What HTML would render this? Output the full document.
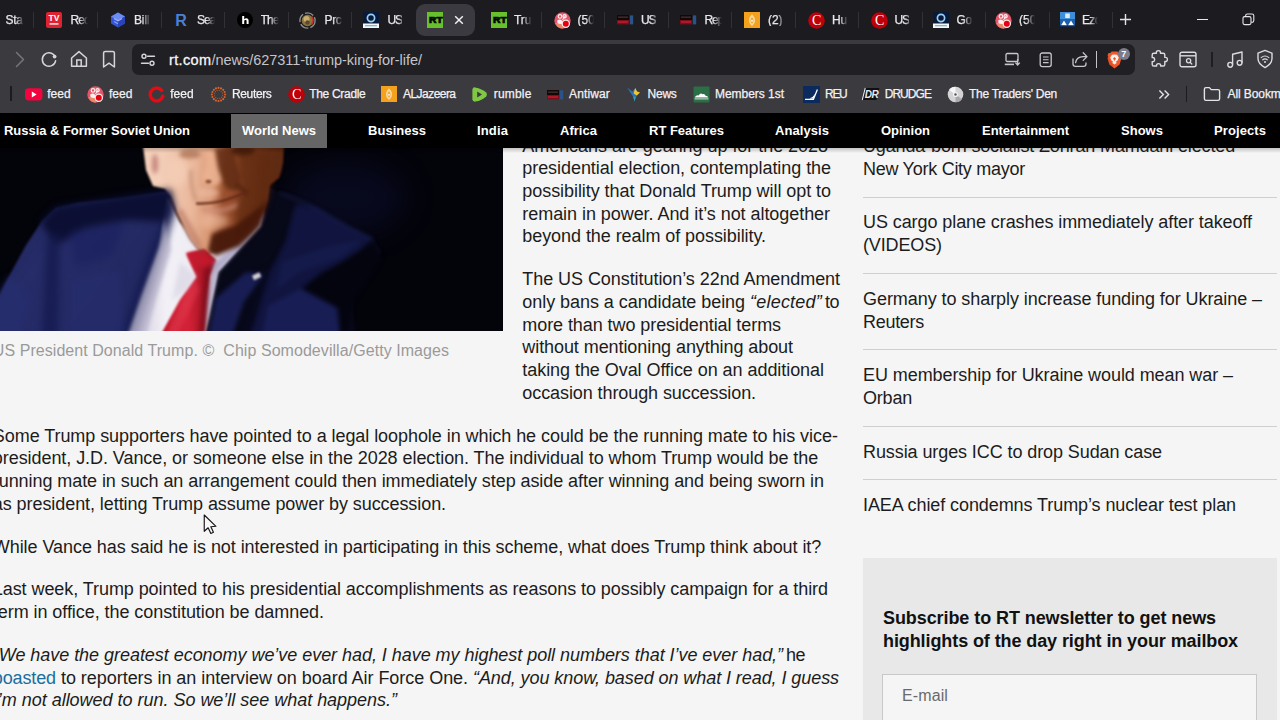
<!DOCTYPE html>
<html><head><meta charset="utf-8"><title>rt</title>
<style>
*{box-sizing:border-box}
html,body{margin:0;padding:0;width:1280px;height:720px;overflow:hidden;background:#f5f5f5;font-family:"Liberation Sans",sans-serif;}
.t{position:absolute;white-space:pre;font-family:"Liberation Sans",sans-serif;}
.a{position:absolute}
#tabs{left:0;top:0;width:1280px;height:40px;background:#1b1b20}
#tool{left:0;top:40px;width:1280px;height:73px;background:#3a3a3f}
#url{left:132px;top:44px;width:1003px;height:31px;border-radius:7px;background:#1f1f24}
#nav{left:0;top:113px;width:1280px;height:35px;background:#000}
#navsh{left:0;top:148px;width:1280px;height:5px;background:linear-gradient(#0003,#0000)}
#wn{left:231px;top:113.5px;width:96px;height:34.5px;background:#666}
.sep{position:absolute;left:863px;width:414px;height:1px;background:#cfcfcf}
.tsep{position:absolute;top:12px;width:1px;height:16px;background:#313137}
</style></head><body>

<div class="t" style="left:522.30px;top:136.76px;font-size:18px;line-height:18px;color:#1c1c1c;font-weight:normal;font-style:normal;letter-spacing:-0.040px;">Americans are gearing up for the 2028</div>
<div class="t" style="left:522.30px;top:159.01px;font-size:18px;line-height:18px;color:#1c1c1c;font-weight:normal;font-style:normal;letter-spacing:-0.063px;">presidential election, contemplating the</div>
<div class="t" style="left:522.30px;top:181.76px;font-size:18px;line-height:18px;color:#1c1c1c;font-weight:normal;font-style:normal;letter-spacing:-0.060px;">possibility that Donald Trump will opt to</div>
<div class="t" style="left:522.30px;top:204.51px;font-size:18px;line-height:18px;color:#1c1c1c;font-weight:normal;font-style:normal;letter-spacing:-0.054px;">remain in power. And it’s not altogether</div>
<div class="t" style="left:522.30px;top:227.26px;font-size:18px;line-height:18px;color:#1c1c1c;font-weight:normal;font-style:normal;letter-spacing:-0.066px;">beyond the realm of possibility.</div>
<div class="t" style="left:522.30px;top:270.01px;font-size:18px;line-height:18px;color:#1c1c1c;font-weight:normal;font-style:normal;letter-spacing:-0.060px;">The US Constitution’s 22nd Amendment</div>
<div class="t" style="left:522.30px;top:315.51px;font-size:18px;line-height:18px;color:#1c1c1c;font-weight:normal;font-style:normal;letter-spacing:-0.076px;">more than two presidential terms</div>
<div class="t" style="left:522.30px;top:338.26px;font-size:18px;line-height:18px;color:#1c1c1c;font-weight:normal;font-style:normal;letter-spacing:-0.076px;">without mentioning anything about</div>
<div class="t" style="left:522.30px;top:361.01px;font-size:18px;line-height:18px;color:#1c1c1c;font-weight:normal;font-style:normal;letter-spacing:-0.056px;">taking the Oval Office on an additional</div>
<div class="t" style="left:522.30px;top:383.76px;font-size:18px;line-height:18px;color:#1c1c1c;font-weight:normal;font-style:normal;letter-spacing:-0.087px;">occasion through succession.</div>
<div class="t" style="left:522.30px;top:292.76px;font-size:18px;line-height:18px;color:#1c1c1c;font-weight:normal;font-style:normal;letter-spacing:-0.053px;">only bans a candidate being </div>
<div class="t" style="left:750.00px;top:292.76px;font-size:18px;line-height:18px;color:#1c1c1c;font-weight:normal;font-style:italic;letter-spacing:0.219px;">“elected”</div>
<div class="t" style="left:825.00px;top:292.76px;font-size:18px;line-height:18px;color:#1c1c1c;font-weight:normal;font-style:normal;letter-spacing:-0.508px;">to</div>
<div class="t" style="left:-7.20px;top:426.51px;font-size:18px;line-height:18px;color:#1c1c1c;font-weight:normal;font-style:normal;letter-spacing:-0.062px;">Some Trump supporters have pointed to a legal loophole in which he could be the running mate to his vice-</div>
<div class="t" style="left:-7.20px;top:449.26px;font-size:18px;line-height:18px;color:#1c1c1c;font-weight:normal;font-style:normal;letter-spacing:-0.063px;">president, J.D. Vance, or someone else in the 2028 election. The individual to whom Trump would be the</div>
<div class="t" style="left:-7.20px;top:472.01px;font-size:18px;line-height:18px;color:#1c1c1c;font-weight:normal;font-style:normal;letter-spacing:-0.072px;">running mate in such an arrangement could then immediately step aside after winning and being sworn in</div>
<div class="t" style="left:-7.20px;top:494.76px;font-size:18px;line-height:18px;color:#1c1c1c;font-weight:normal;font-style:normal;letter-spacing:-0.073px;">as president, letting Trump assume power by succession.</div>
<div class="t" style="left:-7.20px;top:537.51px;font-size:18px;line-height:18px;color:#1c1c1c;font-weight:normal;font-style:normal;letter-spacing:-0.063px;">While Vance has said he is not interested in participating in this scheme, what does Trump think about it?</div>
<div class="t" style="left:-7.20px;top:580.26px;font-size:18px;line-height:18px;color:#1c1c1c;font-weight:normal;font-style:normal;letter-spacing:-0.070px;">Last week, Trump pointed to his presidential accomplishments as reasons to possibly campaign for a third</div>
<div class="t" style="left:-7.20px;top:603.01px;font-size:18px;line-height:18px;color:#1c1c1c;font-weight:normal;font-style:normal;letter-spacing:-0.062px;">term in office, the constitution be damned.</div>
<div class="t" style="left:-7.20px;top:645.76px;font-size:18px;line-height:18px;color:#1c1c1c;font-weight:normal;font-style:italic;letter-spacing:-0.040px;">“We have the greatest economy we’ve ever had, I have my highest poll numbers that I’ve ever had,”</div>
<div class="t" style="left:786.00px;top:645.76px;font-size:18px;line-height:18px;color:#1c1c1c;font-weight:normal;font-style:normal;letter-spacing:-0.516px;">he</div>
<div class="t" style="left:-7.20px;top:668.51px;font-size:18px;line-height:18px;color:#1a6e9e;font-weight:normal;font-style:normal;letter-spacing:-0.123px;">boasted</div>
<div class="t" style="left:56.00px;top:668.51px;font-size:18px;line-height:18px;color:#1c1c1c;font-weight:normal;font-style:normal;letter-spacing:-0.041px;"> to reporters in an interview on board Air Force One. </div>
<div class="t" style="left:473.00px;top:668.51px;font-size:18px;line-height:18px;color:#1c1c1c;font-weight:normal;font-style:italic;letter-spacing:-0.072px;">“And, you know, based on what I read, I guess</div>
<div class="t" style="left:-7.20px;top:691.26px;font-size:18px;line-height:18px;color:#1c1c1c;font-weight:normal;font-style:italic;letter-spacing:-0.020px;">I’m not allowed to run. So we’ll see what happens.”</div>
<div class="t" style="left:-7.20px;top:343.46px;font-size:16px;line-height:16px;color:#9a9a9a;font-weight:normal;font-style:normal;letter-spacing:0.056px;">US President Donald Trump. ©  Chip Somodevilla/Getty Images</div>
<div class="t" style="left:863.00px;top:136.76px;font-size:18px;line-height:18px;color:#1c1c1c;font-weight:normal;font-style:normal;letter-spacing:-0.141px;">Uganda-born socialist Zohran Mamdani elected</div>
<div class="t" style="left:863.00px;top:159.76px;font-size:18px;line-height:18px;color:#1c1c1c;font-weight:normal;font-style:normal;letter-spacing:-0.266px;">New York City mayor</div>
<div class="t" style="left:863.00px;top:213.26px;font-size:18px;line-height:18px;color:#1c1c1c;font-weight:normal;font-style:normal;letter-spacing:-0.081px;">US cargo plane crashes immediately after takeoff</div>
<div class="t" style="left:863.00px;top:236.26px;font-size:18px;line-height:18px;color:#1c1c1c;font-weight:normal;font-style:normal;letter-spacing:-0.127px;">(VIDEOS)</div>
<div class="t" style="left:863.00px;top:289.76px;font-size:18px;line-height:18px;color:#1c1c1c;font-weight:normal;font-style:normal;letter-spacing:-0.065px;">Germany to sharply increase funding for Ukraine –</div>
<div class="t" style="left:863.00px;top:312.76px;font-size:18px;line-height:18px;color:#1c1c1c;font-weight:normal;font-style:normal;letter-spacing:-0.290px;">Reuters</div>
<div class="t" style="left:863.00px;top:366.26px;font-size:18px;line-height:18px;color:#1c1c1c;font-weight:normal;font-style:normal;letter-spacing:-0.075px;">EU membership for Ukraine would mean war –</div>
<div class="t" style="left:863.00px;top:389.26px;font-size:18px;line-height:18px;color:#1c1c1c;font-weight:normal;font-style:normal;letter-spacing:-0.206px;">Orban</div>
<div class="t" style="left:863.00px;top:442.76px;font-size:18px;line-height:18px;color:#1c1c1c;font-weight:normal;font-style:normal;letter-spacing:-0.091px;">Russia urges ICC to drop Sudan case</div>
<div class="t" style="left:863.00px;top:496.26px;font-size:18px;line-height:18px;color:#1c1c1c;font-weight:normal;font-style:normal;letter-spacing:-0.086px;">IAEA chief condemns Trump’s nuclear test plan</div>
<div class="sep" style="top:196.5px"></div>
<div class="sep" style="top:272.5px"></div>
<div class="sep" style="top:349.0px"></div>
<div class="sep" style="top:425.5px"></div>
<div class="sep" style="top:479.0px"></div>
<div class="a" style="left:863px;top:558px;width:414px;height:170px;background:#e8e8e8"></div>
<div class="t" style="left:883.00px;top:608.76px;font-size:18px;line-height:18px;color:#111;font-weight:bold;font-style:normal;letter-spacing:-0.081px;">Subscribe to RT newsletter to get news</div>
<div class="t" style="left:883.00px;top:631.76px;font-size:18px;line-height:18px;color:#111;font-weight:bold;font-style:normal;letter-spacing:-0.093px;">highlights of the day right in your mailbox</div>
<div class="a" style="left:882px;top:673.5px;width:375px;height:60px;background:#f5f5f5;border:1px solid #c8c8c8"></div>
<div class="t" style="left:902.00px;top:687.96px;font-size:16px;line-height:16px;color:#6a6a6a;font-weight:normal;font-style:normal;letter-spacing:0.109px;">E-mail</div>
<div class="a" id="photo" style="left:-4px;top:148px;width:506.5px;height:183px;background:#05050a;overflow:hidden"><svg style="position:absolute;left:4px;top:0" width="502.5" height="183" viewBox="0 148 502.5 183">
<defs>
<filter color-interpolation-filters="sRGB" id="b1" x="-5%" y="-5%" width="110%" height="110%"><feGaussianBlur stdDeviation="0.8"/></filter>
<filter color-interpolation-filters="sRGB" id="b15" x="-20%" y="-20%" width="140%" height="140%"><feGaussianBlur stdDeviation="1.4"/></filter>
<filter color-interpolation-filters="sRGB" id="b2" x="-20%" y="-20%" width="140%" height="140%"><feGaussianBlur stdDeviation="2.2"/></filter>
<filter color-interpolation-filters="sRGB" id="b3" x="-20%" y="-20%" width="140%" height="140%"><feGaussianBlur stdDeviation="3.5"/></filter>
<filter color-interpolation-filters="sRGB" id="b6" x="-50%" y="-50%" width="200%" height="200%"><feGaussianBlur stdDeviation="14"/></filter>
<linearGradient id="skin" gradientUnits="userSpaceOnUse" x1="158" y1="178" x2="276" y2="186">
<stop offset="0" stop-color="#f4d0ba"/><stop offset=".30" stop-color="#ebb89c"/><stop offset=".46" stop-color="#d89672"/><stop offset=".56" stop-color="#9c5230"/><stop offset=".8" stop-color="#823e20"/><stop offset="1" stop-color="#602a12"/></linearGradient>
<linearGradient id="suitL" gradientUnits="userSpaceOnUse" x1="0" y1="210" x2="165" y2="330">
<stop offset="0" stop-color="#1e2357"/><stop offset=".3" stop-color="#262c68"/><stop offset="1" stop-color="#21275e"/></linearGradient>
<linearGradient id="shirt" gradientUnits="userSpaceOnUse" x1="135" y1="260" x2="262" y2="260">
<stop offset="0" stop-color="#d4d0e0"/><stop offset=".25" stop-color="#f3f1f7"/><stop offset=".6" stop-color="#ece9f2"/><stop offset="1" stop-color="#c2bcd6"/></linearGradient>
<linearGradient id="tie" gradientUnits="userSpaceOnUse" x1="165" y1="300" x2="210" y2="300">
<stop offset="0" stop-color="#bf172a"/><stop offset=".5" stop-color="#d52238"/><stop offset="1" stop-color="#98101f"/></linearGradient>
</defs>
<rect x="0" y="148" width="503" height="183" fill="#03030a"/>
<ellipse cx="345" cy="198" rx="60" ry="36" fill="#0c0e2e" opacity=".55" filter="url(#b6)"/>
<g filter="url(#b1)">
<!-- right suit base (dark) -->
<path d="M268,188 L303,198 L340,221 L374,239 L382,252 L360,275 L352,300 L356,336 L200,336 L212,276 L254,226 Z" fill="#070818"/>
<!-- left suit -->
<path d="M-6,305 L8,278 L26,245 L42,221 L56,208 L78,203 L122,198 L170,191 L175,205 L166,245 L150,292 L134,336 L-6,336 Z" fill="url(#suitL)"/>
<!-- shirt -->
<path d="M167,197 L180,222 L203,252 L225,248 L264,209 L260,226 L218,272 L205,336 L128,336 L141,298 L159,248 Z" fill="url(#shirt)"/>
<!-- neck / face -->
<path d="M143,146 L284,146 L283,162 L279,178 L270,185 L268,200 L262,215 L251,232 L236,244 L219,251 L209,254 L203,252 L197,247 L190,238 L183,225 L176,211 L171,197 L165,189 L153,186 L146,170 Z" fill="url(#skin)"/>
<!-- tie -->
<path d="M186,253 L204,249 L216,260 L210,276 L204,336 L160,336 L180,300 L196,277 Z" fill="url(#tie)"/>
</g>
<!-- right suit lit regions -->
<g filter="url(#b2)">
<path d="M296,204 L318,208 L340,222 L372,239 L352,258 L322,272 L302,288 L338,308 L340,336 L250,336 L258,310 L270,272 L286,240 L292,215 Z" fill="#10143e"/>
<path d="M262,336 L268,306 L300,289 L336,308 L340,336 Z" fill="#181e54"/>
<path d="M282,262 L330,246 L362,240 L340,258 L300,272 L276,290 Z" fill="#141a4a"/>
<path d="M208,336 L216,298 L246,272 L264,274 L244,302 L232,336 Z" fill="#181e54"/>
<path d="M268,268 L244,336" stroke="#070920" stroke-width="4.5" fill="none"/>
<path d="M322,274 L372,243 L382,258 L354,300 L347,336 L341,336 L339,308 L303,289 Z" fill="#04040f" opacity=".97"/>
<path d="M280,193 L310,205 L350,228 L373,239" stroke="#242b68" stroke-width="1.8" fill="none" opacity=".7"/>
</g>
<!-- left suit shading -->
<g filter="url(#b3)">
<path d="M40,222 L56,206 L122,196 L171,189 L175,206 L168,222 L126,220 L84,228 L56,246 Z" fill="#0b0e30" opacity=".95"/>
<path d="M46,240 L60,232 L58,336 L42,336 Z" fill="#141a4e" opacity=".75"/>
<path d="M172,198 L176,210 L152,290 L137,336 L120,336 L150,250 Z" fill="#141a50" opacity=".8"/>
<path d="M70,232 L124,222 L112,256 L75,266 Z" fill="#1a2160" opacity=".65"/>
<path d="M-6,300 L10,275 L30,300 L20,336 L-6,336 Z" fill="#272e72" opacity=".6"/>
<path d="M70,280 L120,270 L125,336 L70,336 Z" fill="#272e70" opacity=".45"/>
</g>
<!-- shirt shading / tie shading -->
<g filter="url(#b2)">
<path d="M141,298 L159,248 L166,225 L171,250 L158,292 L146,336 L128,336 Z" fill="#b7b2ca" opacity=".75"/>
<path d="M218,272 L260,226 L264,211 L232,250 L214,262 L208,300 L205,336 L212,300 Z" fill="#a49ec0" opacity=".8"/>
<path d="M180,262 L196,276 L186,290 L172,300 Z" fill="#dcd8e6" opacity=".8"/>
<path d="M206,262 L215,259 L210,276 L206,330 L199,336 L203,290 Z" fill="#7a0c1a" opacity=".75"/>
<path d="M187,254 L204,250 L215,260 L208,268 L194,265 Z" fill="#c41a2e" opacity=".9"/><path d="M182,300 L196,280 L199,290 L178,334 L166,334 Z" fill="#e23a4e" opacity=".55"/>
</g>
<!-- face features -->
<g filter="url(#b3)">
<path d="M236,149 L272,149 L271,185 L268,200 L262,215 L250,232 L240,240 L235,215 L241,190 Z" fill="#55240c" opacity=".6"/>
<ellipse cx="178" cy="172" rx="10" ry="14" fill="#f6d2bc" opacity=".6"/>
<ellipse cx="214" cy="221" rx="14" ry="8" fill="#eebc9e" opacity=".65"/>
</g>
<g filter="url(#b2)">
<path d="M208,251 L212,234 L236,225 L262,205 L268,198 L260,226 L240,246 L216,256 Z" fill="#46180a" opacity=".94"/>
<path d="M215,149 L233,149 L241,178 L238,191 L227,189 L222,180 L218,168 Z" fill="#5e2a12" opacity=".82"/>
<path d="M205,150 L214,150 L218,168 L222,180 L216,186 L206,184 L202,178 L206,165 Z" fill="#ecb493" opacity=".85"/>
<ellipse cx="190" cy="154" rx="11" ry="4.5" fill="#b0785a" opacity=".85"/>
<ellipse cx="243" cy="151" rx="12" ry="4.5" fill="#421a08" opacity=".85"/>
<ellipse cx="208" cy="193" rx="11" ry="5" fill="#ecbca4" opacity=".6"/>
<ellipse cx="155" cy="164" rx="3.2" ry="10" fill="#c27c76" opacity=".85"/>
<ellipse cx="277" cy="164" rx="4" ry="12" fill="#5e2c14" opacity=".85"/>
<path d="M176,212 L183,226 L190,239 L197,248 L204,253 L200,240 L190,222 L182,208 Z" fill="#b4705a" opacity=".55"/>
<path d="M191,170 Q190,186 196,201" stroke="#bf8a6e" stroke-width="3" fill="none" opacity=".8"/>
<path d="M237,184 Q243,190 247,194" stroke="#3e1808" stroke-width="3" fill="none" opacity=".8"/>
<path d="M200,206 Q220,212 238,202 L236,208 Q218,216 202,211 Z" fill="#cf8f7c" opacity=".7"/>
</g>
<g filter="url(#b1)">
<ellipse cx="208.5" cy="181.5" rx="3" ry="1.8" fill="#6a3018" opacity=".8"/>
<path d="M196,203.5 Q214,204 227,199.5 T247,192" stroke="#64281a" stroke-width="2.2" fill="none"/>
<path d="M171,198 L176,212 L183,226 L190,239 L197,248 L203,253" stroke="#6a3a26" stroke-width="1.2" fill="none" opacity=".7"/>
<rect x="252.5" y="274" width="8" height="5" fill="#d8d0d0" transform="rotate(-25 256 276)"/>
</g>
</svg>
</div>
<div class="a" id="nav"></div><div class="a" id="navsh"></div><div class="a" id="wn"></div>
<div class="t" style="left:4.00px;top:124.00px;font-size:13px;line-height:13px;color:#fff;font-weight:bold;font-style:normal;letter-spacing:-0.039px;">Russia &amp; Former Soviet Union</div>
<div class="t" style="left:242.00px;top:124.00px;font-size:13px;line-height:13px;color:#fff;font-weight:bold;font-style:normal;letter-spacing:-0.017px;">World News</div>
<div class="t" style="left:368.00px;top:124.00px;font-size:13px;line-height:13px;color:#fff;font-weight:bold;font-style:normal;letter-spacing:0.023px;">Business</div>
<div class="t" style="left:477.00px;top:124.00px;font-size:13px;line-height:13px;color:#fff;font-weight:bold;font-style:normal;letter-spacing:0.131px;">India</div>
<div class="t" style="left:560.00px;top:124.00px;font-size:13px;line-height:13px;color:#fff;font-weight:bold;font-style:normal;letter-spacing:0.023px;">Africa</div>
<div class="t" style="left:649.00px;top:124.00px;font-size:13px;line-height:13px;color:#fff;font-weight:bold;font-style:normal;letter-spacing:-0.013px;">RT Features</div>
<div class="t" style="left:775.00px;top:124.00px;font-size:13px;line-height:13px;color:#fff;font-weight:bold;font-style:normal;letter-spacing:0.064px;">Analysis</div>
<div class="t" style="left:881.00px;top:124.00px;font-size:13px;line-height:13px;color:#fff;font-weight:bold;font-style:normal;letter-spacing:-0.016px;">Opinion</div>
<div class="t" style="left:982.00px;top:124.00px;font-size:13px;line-height:13px;color:#fff;font-weight:bold;font-style:normal;letter-spacing:-0.031px;">Entertainment</div>
<div class="t" style="left:1121.00px;top:124.00px;font-size:13px;line-height:13px;color:#fff;font-weight:bold;font-style:normal;letter-spacing:0.019px;">Shows</div>
<div class="t" style="left:1214.00px;top:124.00px;font-size:13px;line-height:13px;color:#fff;font-weight:bold;font-style:normal;letter-spacing:0.086px;">Projects</div>
<div class="a" id="tabs"></div><div class="a" id="tool"></div><div class="a" id="url"></div>
<div class="tsep" style="left:33px"></div>
<div class="tsep" style="left:97px"></div>
<div class="tsep" style="left:160.5px"></div>
<div class="tsep" style="left:224px"></div>
<div class="tsep" style="left:287.5px"></div>
<div class="tsep" style="left:351px"></div>
<div class="tsep" style="left:540.5px"></div>
<div class="tsep" style="left:604px"></div>
<div class="tsep" style="left:667.5px"></div>
<div class="tsep" style="left:731px"></div>
<div class="tsep" style="left:794.5px"></div>
<div class="tsep" style="left:858px"></div>
<div class="tsep" style="left:921.5px"></div>
<div class="tsep" style="left:985px"></div>
<div class="tsep" style="left:1048.5px"></div>
<div class="tsep" style="left:1112px"></div>
<div class="a" style="left:415.5px;top:4px;width:59.5px;height:32px;border-radius:9px;background:#3a3a40"></div>
<svg class="a" style="left:46px;top:12px" width="16" height="16" viewBox="0 0 16 16"><rect x="0" y="0" width="16" height="16" rx="2" fill="#df2230"/><text x="8" y="9.3" font-family="Liberation Sans" font-weight="bold" font-size="8.5" fill="#fff" text-anchor="middle">TV</text><rect x="3.5" y="11" width="9" height="1.8" fill="#f6c6ca"/></svg>
<svg class="a" style="left:110px;top:12px" width="16" height="16" viewBox="0 0 16 16"><path d="M8 0.5 L15 4.5 L15 11.5 L8 15.5 L1 11.5 L1 4.5Z" fill="#3555d6"/><path d="M8 0.5 L15 4.5 L8 8.5 L1 4.5Z" fill="#6d8cf2"/><path d="M8 8.5 L15 4.5 L15 11.5 L8 15.5Z" fill="#2a44b8"/><path d="M4 6.5 L8 8.8 L12 6.5" stroke="#9fb4ff" stroke-width="1.2" fill="none"/><path d="M4 9.5 L8 11.8" stroke="#8aa2f8" stroke-width="1.2" fill="none"/></svg>
<svg class="a" style="left:173px;top:11px" width="16" height="18" viewBox="0 0 16 18"><text x="8" y="14.6" font-family="Liberation Sans" font-weight="bold" font-size="16" fill="#4a80d8" text-anchor="middle">R</text></svg>
<svg class="a" style="left:237px;top:12px" width="16" height="16" viewBox="0 0 16 16"><circle cx="8" cy="8" r="8" fill="#000"/><path d="M5.2 4 h2 v3.2 c.6-.7 1.3-1 2.2-1 1.5 0 2.2.9 2.2 2.4 V12 h-2 V9 c0-.7-.3-1.1-1-1.1 -.8 0-1.4.5-1.4 1.4 V12 h-2z" fill="#fff"/></svg>
<svg class="a" style="left:299px;top:12px" width="17" height="17" viewBox="0 0 17 17"><circle cx="8.5" cy="8.5" r="7.6" fill="none" stroke="#8e8c8a" stroke-width="1.4" stroke-dasharray="9 2"/><circle cx="8.5" cy="8.5" r="5.8" fill="#8c7440"/><circle cx="7.5" cy="7" r="3" fill="#c8b070"/><path d="M12.5 4.5 A6 6 0 0 1 12.5 12.5" stroke="#c8302a" stroke-width="1.6" fill="none"/><circle cx="8.5" cy="10.5" r="2.2" fill="#5a4a2a"/></svg>
<svg class="a" style="left:363px;top:12px" width="16" height="16" viewBox="0 0 16 16"><rect width="16" height="16" fill="#071a3c"/><circle cx="8" cy="6" r="3.6" fill="none" stroke="#9ad0f0" stroke-width="1.7"/><rect x="0" y="11.5" width="16" height="4.5" fill="#f4f6f8"/><rect x="2" y="13" width="12" height="1.3" fill="#7ab8d8"/></svg>
<svg class="a" style="left:427px;top:12px" width="16" height="16" viewBox="0 0 16 16"><rect width="16" height="16" fill="#67c02c"/><text x="2" y="10.95" font-family="Liberation Sans" font-weight="bold" font-size="8.4" fill="#030a00" textLength="13.8" lengthAdjust="spacingAndGlyphs" stroke="#030a00" stroke-width=".7">RT</text></svg>
<svg class="a" style="left:491px;top:12px" width="16" height="16" viewBox="0 0 16 16"><rect width="16" height="16" fill="#67c02c"/><text x="2" y="10.95" font-family="Liberation Sans" font-weight="bold" font-size="8.4" fill="#030a00" textLength="13.8" lengthAdjust="spacingAndGlyphs" stroke="#030a00" stroke-width=".7">RT</text></svg>
<svg class="a" style="left:554px;top:12px" width="17" height="17" viewBox="0 0 17 17"><circle cx="8.5" cy="8.5" r="8.2" fill="#e4576a"/><path d="M1.5 11 A8 8 0 0 0 9 16.6 L10 11 Z" fill="#e88a6a"/><path d="M3.2 8.6 q2.6 -2.2 5.2 .3 q1.2 1.6 -.6 3 q-2.8 .6 -4.4 -1.2z" fill="#fbeeee"/><circle cx="6" cy="4.4" r="1.8" fill="none" stroke="#fbeeee" stroke-width="1.2"/><circle cx="10.6" cy="4.2" r="1.6" fill="none" stroke="#fbeeee" stroke-width="1.2"/><path d="M8.5 8 L11.5 3.5" stroke="#fbeeee" stroke-width="1.1"/><circle cx="11.8" cy="11.8" r="4.2" fill="#fbeeee"/><circle cx="11.8" cy="11.8" r="3" fill="#e60012"/></svg>
<svg class="a" style="left:617px;top:15px" width="17" height="10" viewBox="0 0 17 10"><rect x="0" y="0" width="12" height="5" fill="#120808"/><rect x="1" y="1.4" width="10" height="1.6" fill="#3a2a2a"/><rect x="0" y="5" width="12" height="4.4" fill="#7a0e1a"/><rect x="1" y="6" width="10" height="2" fill="#b01828"/><rect x="12.8" y="0.4" width="3.4" height="9" fill="#2a5488"/></svg>
<svg class="a" style="left:680px;top:15px" width="17" height="10" viewBox="0 0 17 10"><rect x="0" y="0" width="12" height="5" fill="#120808"/><rect x="1" y="1.4" width="10" height="1.6" fill="#3a2a2a"/><rect x="0" y="5" width="12" height="4.4" fill="#7a0e1a"/><rect x="1" y="6" width="10" height="2" fill="#b01828"/><rect x="12.8" y="0.4" width="3.4" height="9" fill="#2a5488"/></svg>
<svg class="a" style="left:744px;top:12px" width="16" height="16" viewBox="0 0 16 16"><rect width="16" height="16" fill="#f4a11d"/><path d="M8 2.2 C9.6 4.4 11.4 6 11 9 C10.8 11 9.6 12.4 8 14 C6.4 12.4 5.2 11 5 9 C4.6 6 6.4 4.4 8 2.2Z" fill="#fbd9a0"/><path d="M8 5 C8.8 6.4 9.6 7.4 9.4 9 C9.2 10.2 8.6 11 8 11.8 C7.4 11 6.8 10.2 6.6 9 C6.4 7.4 7.2 6.4 8 5Z" fill="#f4a11d"/><circle cx="8" cy="8.8" r="1" fill="#fff3dc"/></svg>
<svg class="a" style="left:808px;top:11.5px" width="17" height="17" viewBox="0 0 17 17"><circle cx="8.5" cy="8.5" r="8.3" fill="#c00008"/><text x="8.6" y="13.4" font-family="Liberation Serif" font-size="14" fill="#fff" text-anchor="middle">C</text></svg>
<svg class="a" style="left:870.5px;top:11.5px" width="17" height="17" viewBox="0 0 17 17"><circle cx="8.5" cy="8.5" r="8.3" fill="#c00008"/><text x="8.6" y="13.4" font-family="Liberation Serif" font-size="14" fill="#fff" text-anchor="middle">C</text></svg>
<svg class="a" style="left:932.5px;top:12px" width="16" height="16" viewBox="0 0 16 16"><rect width="16" height="16" fill="#071a3c"/><circle cx="8" cy="6" r="3.6" fill="none" stroke="#9ad0f0" stroke-width="1.7"/><rect x="0" y="11.5" width="16" height="4.5" fill="#f4f6f8"/><rect x="2" y="13" width="12" height="1.3" fill="#7ab8d8"/></svg>
<svg class="a" style="left:995px;top:12px" width="17" height="17" viewBox="0 0 17 17"><circle cx="8.5" cy="8.5" r="8.2" fill="#e4576a"/><path d="M1.5 11 A8 8 0 0 0 9 16.6 L10 11 Z" fill="#e88a6a"/><path d="M3.2 8.6 q2.6 -2.2 5.2 .3 q1.2 1.6 -.6 3 q-2.8 .6 -4.4 -1.2z" fill="#fbeeee"/><circle cx="6" cy="4.4" r="1.8" fill="none" stroke="#fbeeee" stroke-width="1.2"/><circle cx="10.6" cy="4.2" r="1.6" fill="none" stroke="#fbeeee" stroke-width="1.2"/><path d="M8.5 8 L11.5 3.5" stroke="#fbeeee" stroke-width="1.1"/><circle cx="11.8" cy="11.8" r="4.2" fill="#fbeeee"/><circle cx="11.8" cy="11.8" r="3" fill="#e60012"/></svg>
<svg class="a" style="left:1060px;top:12px" width="15" height="15" viewBox="0 0 15 15"><rect width="15" height="15" rx="1" fill="#1e5fae"/><rect x="0" y="0" width="15" height="7" fill="#3f8fd8"/><rect x="5.2" y="1.5" width="4.6" height="4.6" fill="#d9ecfb"/><path d="M1 13.5 L4 8.5 L7 13.5Z M8 13.5 L11 8.5 L14 13.5Z" fill="#fff"/><rect x="0" y="13.4" width="15" height="1.6" fill="#0c2a54"/></svg>
<div class="t" style="left:5.50px;top:13.84px;font-size:12px;line-height:12px;color:#e8e8ec;font-weight:normal;font-style:normal;letter-spacing:-0.339px;-webkit-mask-image:linear-gradient(90deg,#000 10px,transparent 18px);mask-image:linear-gradient(90deg,#000 10px,transparent 18px);-webkit-text-stroke:.25px #e8e8ec;">Sta</div>
<div class="t" style="left:70.50px;top:13.84px;font-size:12px;line-height:12px;color:#e8e8ec;font-weight:normal;font-style:normal;letter-spacing:-0.948px;-webkit-mask-image:linear-gradient(90deg,#000 8px,transparent 17px);mask-image:linear-gradient(90deg,#000 8px,transparent 17px);-webkit-text-stroke:.25px #e8e8ec;">Rec</div>
<div class="t" style="left:134.00px;top:13.84px;font-size:12px;line-height:12px;color:#e8e8ec;font-weight:normal;font-style:normal;letter-spacing:-0.129px;-webkit-mask-image:linear-gradient(90deg,#000 8px,transparent 17px);mask-image:linear-gradient(90deg,#000 8px,transparent 17px);-webkit-text-stroke:.25px #e8e8ec;">Bill</div>
<div class="t" style="left:197.00px;top:13.84px;font-size:12px;line-height:12px;color:#e8e8ec;font-weight:normal;font-style:normal;letter-spacing:-1.120px;-webkit-mask-image:linear-gradient(90deg,#000 9px,transparent 18px);mask-image:linear-gradient(90deg,#000 9px,transparent 18px);-webkit-text-stroke:.25px #e8e8ec;">Sea</div>
<div class="t" style="left:260.50px;top:13.84px;font-size:12px;line-height:12px;color:#e8e8ec;font-weight:normal;font-style:normal;letter-spacing:-0.729px;-webkit-mask-image:linear-gradient(90deg,#000 9px,transparent 18px);mask-image:linear-gradient(90deg,#000 9px,transparent 18px);-webkit-text-stroke:.25px #e8e8ec;">The</div>
<div class="t" style="left:324.50px;top:13.84px;font-size:12px;line-height:12px;color:#e8e8ec;font-weight:normal;font-style:normal;letter-spacing:-0.333px;-webkit-mask-image:linear-gradient(90deg,#000 8px,transparent 18px);mask-image:linear-gradient(90deg,#000 8px,transparent 18px);-webkit-text-stroke:.25px #e8e8ec;">Prc</div>
<div class="t" style="left:387.50px;top:13.84px;font-size:12px;line-height:12px;color:#e8e8ec;font-weight:normal;font-style:normal;letter-spacing:-1.086px;-webkit-mask-image:linear-gradient(90deg,#000 10px,transparent 18px);mask-image:linear-gradient(90deg,#000 10px,transparent 18px);-webkit-text-stroke:.25px #e8e8ec;">US</div>
<div class="t" style="left:514.00px;top:13.84px;font-size:12px;line-height:12px;color:#e8e8ec;font-weight:normal;font-style:normal;letter-spacing:-0.021px;-webkit-mask-image:linear-gradient(90deg,#000 8px,transparent 18px);mask-image:linear-gradient(90deg,#000 8px,transparent 18px);-webkit-text-stroke:.25px #e8e8ec;">Tru</div>
<div class="t" style="left:577.50px;top:13.84px;font-size:12px;line-height:12px;color:#e8e8ec;font-weight:normal;font-style:normal;letter-spacing:0.052px;-webkit-mask-image:linear-gradient(90deg,#000 8px,transparent 16px);mask-image:linear-gradient(90deg,#000 8px,transparent 16px);-webkit-text-stroke:.25px #e8e8ec;">(50</div>
<div class="t" style="left:641.00px;top:13.84px;font-size:12px;line-height:12px;color:#e8e8ec;font-weight:normal;font-style:normal;letter-spacing:-1.086px;-webkit-mask-image:linear-gradient(90deg,#000 10px,transparent 19px);mask-image:linear-gradient(90deg,#000 10px,transparent 19px);-webkit-text-stroke:.25px #e8e8ec;">US</div>
<div class="t" style="left:704.50px;top:13.84px;font-size:12px;line-height:12px;color:#e8e8ec;font-weight:normal;font-style:normal;letter-spacing:-1.172px;-webkit-mask-image:linear-gradient(90deg,#000 8px,transparent 17px);mask-image:linear-gradient(90deg,#000 8px,transparent 17px);-webkit-text-stroke:.25px #e8e8ec;">Rep</div>
<div class="t" style="left:768.00px;top:13.84px;font-size:12px;line-height:12px;color:#e8e8ec;font-weight:normal;font-style:normal;letter-spacing:-0.057px;-webkit-mask-image:linear-gradient(90deg,#000 9px,transparent 18px);mask-image:linear-gradient(90deg,#000 9px,transparent 18px);-webkit-text-stroke:.25px #e8e8ec;">(2)</div>
<div class="t" style="left:832.00px;top:13.84px;font-size:12px;line-height:12px;color:#e8e8ec;font-weight:normal;font-style:normal;letter-spacing:-0.172px;-webkit-mask-image:linear-gradient(90deg,#000 8px,transparent 16px);mask-image:linear-gradient(90deg,#000 8px,transparent 16px);-webkit-text-stroke:.25px #e8e8ec;">Hu</div>
<div class="t" style="left:894.50px;top:13.84px;font-size:12px;line-height:12px;color:#e8e8ec;font-weight:normal;font-style:normal;letter-spacing:-1.086px;-webkit-mask-image:linear-gradient(90deg,#000 10px,transparent 18px);mask-image:linear-gradient(90deg,#000 10px,transparent 18px);-webkit-text-stroke:.25px #e8e8ec;">US</div>
<div class="t" style="left:956.50px;top:13.84px;font-size:12px;line-height:12px;color:#e8e8ec;font-weight:normal;font-style:normal;letter-spacing:-0.258px;-webkit-mask-image:linear-gradient(90deg,#000 6px,transparent 16px);mask-image:linear-gradient(90deg,#000 6px,transparent 16px);-webkit-text-stroke:.25px #e8e8ec;">Go</div>
<div class="t" style="left:1019.00px;top:13.84px;font-size:12px;line-height:12px;color:#e8e8ec;font-weight:normal;font-style:normal;letter-spacing:0.052px;-webkit-mask-image:linear-gradient(90deg,#000 7px,transparent 16px);mask-image:linear-gradient(90deg,#000 7px,transparent 16px);-webkit-text-stroke:.25px #e8e8ec;">(50</div>
<div class="t" style="left:1082.00px;top:13.84px;font-size:12px;line-height:12px;color:#e8e8ec;font-weight:normal;font-style:normal;letter-spacing:-0.672px;-webkit-mask-image:linear-gradient(90deg,#000 8px,transparent 16px);mask-image:linear-gradient(90deg,#000 8px,transparent 16px);-webkit-text-stroke:.25px #e8e8ec;">Ezc</div>
<svg class="a" style="left:454px;top:15px" width="10" height="10" viewBox="0 0 10 10"><path d="M1.2 1.2 L8.8 8.8 M8.8 1.2 L1.2 8.8" stroke="#f0f0f2" stroke-width="1.5" fill="none"/></svg>
<svg class="a" style="left:1119px;top:13px" width="13" height="13" viewBox="0 0 13 13"><path d="M6.5 1 V12 M1 6.5 H12" stroke="#e4e4e8" stroke-width="1.4" fill="none"/></svg>
<div class="a" style="left:1197px;top:19px;width:11px;height:1.2px;background:#e8e8ea"></div>
<svg class="a" style="left:1242px;top:13px" width="13" height="13" viewBox="0 0 13 13"><rect x="1" y="3.6" width="8" height="8" rx="1.6" fill="none" stroke="#e8e8ea" stroke-width="1.1"/><path d="M3.6 3.4 V2.8 Q3.6 1 5.4 1 H10 Q11.8 1 11.8 2.8 V7.6 Q11.8 9.4 10 9.4 H9.4" fill="none" stroke="#e8e8ea" stroke-width="1.1"/></svg>
<svg class="a" style="left:14px;top:50px" width="12" height="19" viewBox="0 0 12 19"><path d="M2.5 2.5 L9.5 9.5 L2.5 16.5" stroke="#75757c" stroke-width="1.5" fill="none" stroke-linecap="round" stroke-linejoin="round"/></svg>
<svg class="a" style="left:40px;top:50px" width="18" height="18" viewBox="0 0 18 18"><path d="M15.3 7.2 A6.7 6.7 0 1 0 15.6 10.8" stroke="#d6d6da" stroke-width="1.5" fill="none" stroke-linecap="round"/><circle cx="14.6" cy="6.6" r="1.9" fill="#d6d6da"/></svg>
<svg class="a" style="left:70px;top:50px" width="18" height="18" viewBox="0 0 18 18"><path d="M1.6 8 L9 1.6 L16.4 8 V16.2 H1.6Z" stroke="#d6d6da" stroke-width="1.5" fill="none" stroke-linejoin="round"/><path d="M6.8 16 V10 H11.2 V16" stroke="#d6d6da" stroke-width="1.5" fill="none"/></svg>
<svg class="a" style="left:102px;top:50px" width="14" height="19" viewBox="0 0 14 19"><path d="M1.6 3 Q1.6 1.4 3.2 1.4 H10.8 Q12.4 1.4 12.4 3 V17 L7 13.2 L1.6 17Z" stroke="#d6d6da" stroke-width="1.5" fill="none" stroke-linejoin="round"/></svg>
<svg class="a" style="left:140px;top:52px" width="16" height="16" viewBox="0 0 16 16"><circle cx="4" cy="4.3" r="2" fill="none" stroke="#d6d6da" stroke-width="1.4"/><path d="M7.5 4.3 H14.5" stroke="#d6d6da" stroke-width="1.4" stroke-linecap="round"/><circle cx="12" cy="11.3" r="2" fill="none" stroke="#d6d6da" stroke-width="1.4"/><path d="M1.5 11.3 H8.5" stroke="#d6d6da" stroke-width="1.4" stroke-linecap="round"/></svg>
<div class="t" style="left:169.00px;top:52.73px;font-size:14.5px;line-height:14.5px;color:#f6f6f8;font-weight:normal;font-style:normal;letter-spacing:0.370px;-webkit-text-stroke:.3px #f6f6f8;">rt.com</div>
<div class="t" style="left:211.50px;top:52.73px;font-size:14.5px;line-height:14.5px;color:#c4c4ca;font-weight:normal;font-style:normal;letter-spacing:-0.036px;">/news/627311-trump-king-for-life/</div>
<svg class="a" style="left:1004px;top:52px" width="18" height="15" viewBox="0 0 18 15"><rect x="2" y="1.5" width="12" height="8" rx="1.2" fill="none" stroke="#c8c8cc" stroke-width="1.3"/><path d="M0.8 12.4 H10" stroke="#c8c8cc" stroke-width="1.6"/><path d="M13.6 7 V12.6 M11.4 10.6 L13.6 13 L15.8 10.6" stroke="#c8c8cc" stroke-width="1.3" fill="none"/></svg>
<svg class="a" style="left:1039px;top:52px" width="14" height="16" viewBox="0 0 14 16"><rect x="1.2" y="1" width="11" height="13.6" rx="2" fill="none" stroke="#c8c8cc" stroke-width="1.3"/><path d="M4 5 H9.6 M4 7.8 H9.6 M4 10.6 H9.6" stroke="#c8c8cc" stroke-width="1.1"/></svg>
<svg class="a" style="left:1071px;top:51px" width="18" height="17" viewBox="0 0 18 17"><path d="M2 8 V13 Q2 15.4 4.4 15.4 H12.6 Q15 15.4 15 13 V12" stroke="#c8c8cc" stroke-width="1.3" fill="none" stroke-linecap="round"/><path d="M4.6 11.6 Q5.4 6 12 5.6 H15.6 M12.2 1.8 L16 5.6 L12.2 9.4" stroke="#c8c8cc" stroke-width="1.3" fill="none" stroke-linecap="round" stroke-linejoin="round"/></svg>
<div class="a" style="left:1096px;top:51px;width:1.2px;height:17px;background:#c4c4c8"></div>
<svg class="a" style="left:1107px;top:51px" width="15" height="18" viewBox="0 0 15 18"><path d="M7.5 0.6 L10.4 0.6 L11.6 2 L13.4 2 L14.4 4 L13.8 5.4 L14.4 7.6 L12.6 13.4 L7.5 17.4 L2.4 13.4 L0.6 7.6 L1.2 5.4 L0.6 4 L1.6 2 L3.4 2 L4.6 0.6Z" fill="#f1592b"/><path d="M7.5 3.4 L10 3.8 L11.8 6.4 L10.6 9.4 L9 10.6 L9.6 12 L7.5 13.6 L5.4 12 L6 10.6 L4.4 9.4 L3.2 6.4 L5 3.8Z" fill="#fff" opacity=".92"/><path d="M7.5 6 L9 7.4 L7.5 10 L6 7.4Z" fill="#f1592b"/><path d="M0.6 4 L7.5 17.4 L2.4 13.4 L0.6 7.6Z" fill="#d8401c" opacity=".45"/></svg>
<div class="a" style="left:1117.5px;top:47.5px;width:12.5px;height:12.5px;border-radius:50%;background:#7c7c8a"></div>
<div class="t" style="left:1121.30px;top:49.68px;font-size:9px;line-height:9px;color:#fff;font-weight:bold;font-style:normal;letter-spacing:-0.016px;">7</div>
<svg class="a" style="left:1149px;top:49px" width="20" height="20" viewBox="0 0 20 20"><path d="M7.4 4.2 Q7 1.6 9.4 1.6 Q11.8 1.6 11.4 4.2 H14.2 Q15.8 4.2 15.8 5.8 V8.4 Q18.4 8 18.4 10.4 Q18.4 12.8 15.8 12.4 V15.4 Q15.8 17 14.2 17 H11.6 Q12 14.6 9.6 14.6 Q7.2 14.6 7.6 17 H4.8 Q3.2 17 3.2 15.4 V12.6 Q5.6 13 5.6 10.6 Q5.6 8.2 3.2 8.6 V5.8 Q3.2 4.2 4.8 4.2Z" stroke="#dcdce0" stroke-width="1.4" fill="none" stroke-linejoin="round"/></svg>
<svg class="a" style="left:1179px;top:51px" width="18" height="17" viewBox="0 0 18 17"><rect x="1" y="1.2" width="16" height="14.6" rx="2" fill="none" stroke="#dcdce0" stroke-width="1.4"/><path d="M1 4.8 H17" stroke="#dcdce0" stroke-width="1.4"/><circle cx="9.6" cy="9.8" r="2.1" fill="none" stroke="#dcdce0" stroke-width="1.3"/><path d="M11.2 11.4 L12.8 13" stroke="#dcdce0" stroke-width="1.3" stroke-linecap="round"/></svg>
<div class="a" style="left:1211px;top:52px;width:1.5px;height:15px;background:#1e1e22"></div>
<svg class="a" style="left:1226px;top:50px" width="19" height="19" viewBox="0 0 19 19"><path d="M6.6 14.6 V4.2 L16 2 V12.6" stroke="#dcdce0" stroke-width="1.4" fill="none" stroke-linejoin="round"/><circle cx="4.2" cy="14.8" r="2.4" fill="none" stroke="#dcdce0" stroke-width="1.4"/><circle cx="13.6" cy="12.8" r="2.4" fill="none" stroke="#dcdce0" stroke-width="1.4"/></svg>
<svg class="a" style="left:1256px;top:49px" width="18" height="20" viewBox="0 0 18 20"><path d="M9 1.4 L16 4.2 V9.6 Q16 15 9 18.6 Q2 15 2 9.6 V4.2Z" stroke="#dcdce0" stroke-width="1.4" fill="none" stroke-linejoin="round"/><path d="M5.2 8.6 Q9 5.4 12.8 8.6 M6.8 10.8 Q9 9 11.2 10.8" stroke="#dcdce0" stroke-width="1.2" fill="none" stroke-linecap="round"/><circle cx="9" cy="13" r="1" fill="#dcdce0"/></svg>
<div class="a" style="left:10px;top:86px;width:1.5px;height:15px;background:#1c1c20"></div>
<svg class="a" style="left:25px;top:88px" width="18" height="13" viewBox="0 0 18 13"><rect x="0" y="0.3" width="17.4" height="12.2" rx="3.4" fill="#f4033f"/><path d="M6.8 3.4 L11.6 6.4 L6.8 9.4Z" fill="#fff"/></svg>
<div class="t" style="left:47.30px;top:87.84px;font-size:12px;line-height:12px;color:#f2f2f4;font-weight:normal;font-style:normal;letter-spacing:-0.015px;-webkit-text-stroke:.25px #f2f2f4;">feed</div>
<svg class="a" style="left:86.5px;top:85.5px" width="17" height="17" viewBox="0 0 17 17"><circle cx="8.5" cy="8.5" r="8.2" fill="#e4576a"/><path d="M1.5 11 A8 8 0 0 0 9 16.6 L10 11 Z" fill="#e88a6a"/><path d="M3.2 8.6 q2.6 -2.2 5.2 .3 q1.2 1.6 -.6 3 q-2.8 .6 -4.4 -1.2z" fill="#fbeeee"/><circle cx="6" cy="4.4" r="1.8" fill="none" stroke="#fbeeee" stroke-width="1.2"/><circle cx="10.6" cy="4.2" r="1.6" fill="none" stroke="#fbeeee" stroke-width="1.2"/><path d="M8.5 8 L11.5 3.5" stroke="#fbeeee" stroke-width="1.1"/><circle cx="11.8" cy="11.8" r="4.2" fill="#fbeeee"/><circle cx="11.8" cy="11.8" r="3" fill="#e60012"/></svg>
<div class="t" style="left:109.00px;top:87.84px;font-size:12px;line-height:12px;color:#f2f2f4;font-weight:normal;font-style:normal;letter-spacing:-0.015px;-webkit-text-stroke:.25px #f2f2f4;">feed</div>
<svg class="a" style="left:148px;top:86px" width="17" height="17" viewBox="0 0 17 17"><path d="M13.6 4.4 A6.4 6.4 0 1 0 14.8 10.2" stroke="#e60a14" stroke-width="3.4" fill="none" stroke-linecap="round"/></svg>
<div class="t" style="left:170.30px;top:87.84px;font-size:12px;line-height:12px;color:#f2f2f4;font-weight:normal;font-style:normal;letter-spacing:-0.015px;-webkit-text-stroke:.25px #f2f2f4;">feed</div>
<svg class="a" style="left:209.5px;top:85.5px" width="17" height="17" viewBox="0 0 17 17"><circle cx="15.10" cy="8.50" r="1.05" fill="#d9642a"/><circle cx="14.60" cy="11.03" r="1.05" fill="#d9642a"/><circle cx="13.17" cy="13.17" r="1.05" fill="#d9642a"/><circle cx="11.03" cy="14.60" r="1.05" fill="#d9642a"/><circle cx="8.50" cy="15.10" r="1.05" fill="#d9642a"/><circle cx="5.97" cy="14.60" r="1.05" fill="#d9642a"/><circle cx="3.83" cy="13.17" r="1.05" fill="#d9642a"/><circle cx="2.40" cy="11.03" r="1.05" fill="#d9642a"/><circle cx="1.90" cy="8.50" r="1.05" fill="#d9642a"/><circle cx="2.40" cy="5.97" r="1.05" fill="#d9642a"/><circle cx="3.83" cy="3.83" r="1.05" fill="#d9642a"/><circle cx="5.97" cy="2.40" r="1.05" fill="#d9642a"/><circle cx="8.50" cy="1.90" r="1.05" fill="#d9642a"/><circle cx="11.03" cy="2.40" r="1.05" fill="#d9642a"/><circle cx="13.17" cy="3.83" r="1.05" fill="#d9642a"/><circle cx="14.60" cy="5.97" r="1.05" fill="#d9642a"/><circle cx="12.62" cy="9.33" r=".7" fill="#b8501f"/><circle cx="11.65" cy="11.28" r=".7" fill="#b8501f"/><circle cx="9.84" cy="12.48" r=".7" fill="#b8501f"/><circle cx="7.67" cy="12.62" r=".7" fill="#b8501f"/><circle cx="5.72" cy="11.65" r=".7" fill="#b8501f"/><circle cx="4.52" cy="9.84" r=".7" fill="#b8501f"/><circle cx="4.38" cy="7.67" r=".7" fill="#b8501f"/><circle cx="5.35" cy="5.72" r=".7" fill="#b8501f"/><circle cx="7.16" cy="4.52" r=".7" fill="#b8501f"/><circle cx="9.33" cy="4.38" r=".7" fill="#b8501f"/><circle cx="11.28" cy="5.35" r=".7" fill="#b8501f"/><circle cx="12.48" cy="7.16" r=".7" fill="#b8501f"/></svg>
<div class="t" style="left:232.00px;top:87.84px;font-size:12px;line-height:12px;color:#f2f2f4;font-weight:normal;font-style:normal;letter-spacing:-0.362px;-webkit-text-stroke:.25px #f2f2f4;">Reuters</div>
<svg class="a" style="left:287.5px;top:85.5px" width="17" height="17" viewBox="0 0 17 17"><circle cx="8.5" cy="8.5" r="8.3" fill="#c00008"/><text x="8.6" y="13.4" font-family="Liberation Serif" font-size="14" fill="#fff" text-anchor="middle">C</text></svg>
<div class="t" style="left:309.20px;top:87.84px;font-size:12px;line-height:12px;color:#f2f2f4;font-weight:normal;font-style:normal;letter-spacing:-0.307px;-webkit-text-stroke:.25px #f2f2f4;">The Cradle</div>
<svg class="a" style="left:381px;top:86px" width="16" height="16" viewBox="0 0 16 16"><rect width="16" height="16" fill="#f4a11d"/><path d="M8 2.2 C9.6 4.4 11.4 6 11 9 C10.8 11 9.6 12.4 8 14 C6.4 12.4 5.2 11 5 9 C4.6 6 6.4 4.4 8 2.2Z" fill="#fbd9a0"/><path d="M8 5 C8.8 6.4 9.6 7.4 9.4 9 C9.2 10.2 8.6 11 8 11.8 C7.4 11 6.8 10.2 6.6 9 C6.4 7.4 7.2 6.4 8 5Z" fill="#f4a11d"/><circle cx="8" cy="8.8" r="1" fill="#fff3dc"/></svg>
<div class="t" style="left:403.00px;top:87.84px;font-size:12px;line-height:12px;color:#f2f2f4;font-weight:normal;font-style:normal;letter-spacing:-0.542px;-webkit-text-stroke:.25px #f2f2f4;">ALJazeera</div>
<svg class="a" style="left:471px;top:86px" width="17" height="17" viewBox="0 0 17 17"><path d="M4.2 1.4 Q1.6 1 1.4 3.8 V13.2 Q1.6 16 4.4 15.6 Q11 14.4 15.2 10.4 Q16.8 8.5 15.2 6.6 Q11 2.6 4.2 1.4Z" fill="#7fc843"/><path d="M6.2 5.6 L11 8.5 L6.2 11.4Z" fill="#3a3a3f"/></svg>
<div class="t" style="left:493.80px;top:87.84px;font-size:12px;line-height:12px;color:#f2f2f4;font-weight:normal;font-style:normal;letter-spacing:0.169px;-webkit-text-stroke:.25px #f2f2f4;">rumble</div>
<svg class="a" style="left:546.5px;top:89.5px" width="17" height="10" viewBox="0 0 17 10"><rect x="0" y="0" width="12" height="5" fill="#120808"/><rect x="1" y="1.4" width="10" height="1.6" fill="#3a2a2a"/><rect x="0" y="5" width="12" height="4.4" fill="#7a0e1a"/><rect x="1" y="6" width="10" height="2" fill="#b01828"/><rect x="12.8" y="0.4" width="3.4" height="9" fill="#2a5488"/></svg>
<div class="t" style="left:569.00px;top:87.84px;font-size:12px;line-height:12px;color:#f2f2f4;font-weight:normal;font-style:normal;letter-spacing:0.141px;-webkit-text-stroke:.25px #f2f2f4;">Antiwar</div>
<svg class="a" style="left:626px;top:86px" width="15" height="17" viewBox="0 0 15 17"><path d="M1 1.4 L6.4 5.4 L9.2 2 L11 5.6 L14 6.4 L10.8 9.4 L8.6 15.6 L7 10.6 Z" fill="#2f6fb8"/><path d="M9.2 2 L11 5.6 L14 6.4 L10.8 9.4 L7.6 7.4Z" fill="#f3c623"/><path d="M7 10.6 L8.6 15.6 L9.6 11Z" fill="#2aa7a0"/></svg>
<div class="t" style="left:647.60px;top:87.84px;font-size:12px;line-height:12px;color:#f2f2f4;font-weight:normal;font-style:normal;letter-spacing:-0.279px;-webkit-text-stroke:.25px #f2f2f4;">News</div>
<svg class="a" style="left:693px;top:86px" width="17" height="17" viewBox="0 0 17 17"><rect x=".5" y=".5" width="16" height="16" rx="1" fill="#2c6e45"/><path d="M1.6 11.4 Q3.4 8.8 5.6 9.4 Q7.4 6.6 9.6 8.2 Q11.8 7.6 12.6 9.8 Q14.6 9.8 15.4 11.4Z" fill="#fff"/><rect x="1.6" y="12.4" width="13.8" height="1" fill="#cfe6d6"/></svg>
<div class="t" style="left:715.00px;top:87.84px;font-size:12px;line-height:12px;color:#f2f2f4;font-weight:normal;font-style:normal;letter-spacing:-0.033px;-webkit-text-stroke:.25px #f2f2f4;">Members 1st</div>
<svg class="a" style="left:803px;top:86px" width="17" height="17" viewBox="0 0 17 17"><rect width="17" height="17" fill="#0b2a5e"/><path d="M2 13.4 H10.4 L14.4 3.4" stroke="#fff" stroke-width="1.3" fill="none"/><path d="M6.4 12.6 Q10 11.6 12.2 7.8 L10.4 12.8Z" fill="#fff"/></svg>
<div class="t" style="left:825.00px;top:87.84px;font-size:12px;line-height:12px;color:#f2f2f4;font-weight:normal;font-style:normal;letter-spacing:-1.281px;-webkit-text-stroke:.25px #f2f2f4;">REU</div>
<svg class="a" style="left:861px;top:87px" width="19" height="14" viewBox="0 0 19 14"><path d="M3.4 1 H18.4 L15.4 13 H0.4Z" fill="#101014"/><path d="M1.2 13 L4.2 1" stroke="#e8e8ea" stroke-width="1.1"/><text x="10.4" y="11" font-family="Liberation Sans" font-weight="bold" font-style="italic" font-size="10" fill="#e8e8ea" text-anchor="middle" letter-spacing="-0.5">DR</text></svg>
<div class="t" style="left:884.70px;top:87.84px;font-size:12px;line-height:12px;color:#f2f2f4;font-weight:normal;font-style:normal;letter-spacing:-0.953px;-webkit-text-stroke:.25px #f2f2f4;">DRUDGE</div>
<svg class="a" style="left:946.5px;top:86px" width="17" height="17" viewBox="0 0 17 17"><circle cx="8.5" cy="8.5" r="7.8" fill="#d4d4d6"/><path d="M8.5 8.5 L2 4 A7.8 7.8 0 0 1 8.5 0.7Z" fill="#f6f6f6"/><path d="M8.5 8.5 L15 13 A7.8 7.8 0 0 1 8.5 16.3Z" fill="#a9a9ad"/><circle cx="8.5" cy="8.5" r="2.6" fill="#f0f0f0"/><circle cx="8.5" cy="8.5" r="1.2" fill="#5a5a60"/></svg>
<div class="t" style="left:969.00px;top:87.84px;font-size:12px;line-height:12px;color:#f2f2f4;font-weight:normal;font-style:normal;letter-spacing:-0.271px;-webkit-text-stroke:.25px #f2f2f4;">The Traders&#x27; Den</div>
<svg class="a" style="left:1158px;top:89px" width="12" height="11" viewBox="0 0 12 11"><path d="M1.4 1.4 L5.4 5.4 L1.4 9.4 M6.6 1.4 L10.6 5.4 L6.6 9.4" stroke="#e4e4e8" stroke-width="1.4" fill="none"/></svg>
<div class="a" style="left:1185.5px;top:86px;width:1.5px;height:16px;background:#1c1c20"></div>
<svg class="a" style="left:1203px;top:86px" width="18" height="16" viewBox="0 0 18 16"><path d="M1.4 3.2 Q1.4 1.6 3 1.6 H6.4 L8.2 3.6 H15 Q16.6 3.6 16.6 5.2 V12.8 Q16.6 14.4 15 14.4 H3 Q1.4 14.4 1.4 12.8Z" stroke="#e4e4e8" stroke-width="1.4" fill="none" stroke-linejoin="round"/></svg>
<div class="t" style="left:1227.60px;top:87.84px;font-size:12px;line-height:12px;color:#f2f2f4;font-weight:normal;font-style:normal;letter-spacing:-0.099px;-webkit-text-stroke:.25px #f2f2f4;">All Bookmarks</div>
<svg class="a" style="left:202px;top:513px" width="16" height="22" viewBox="-2.25 -2 16 22"><path d="M0 0 L0 16.3 L3.9 12.8 L6.6 18.5 L9.2 17.3 L6.6 11.7 L11.7 11.3 Z" fill="#f8f8f8" stroke="#16161a" stroke-width="1.15" stroke-linejoin="round"/></svg>
</body></html>
